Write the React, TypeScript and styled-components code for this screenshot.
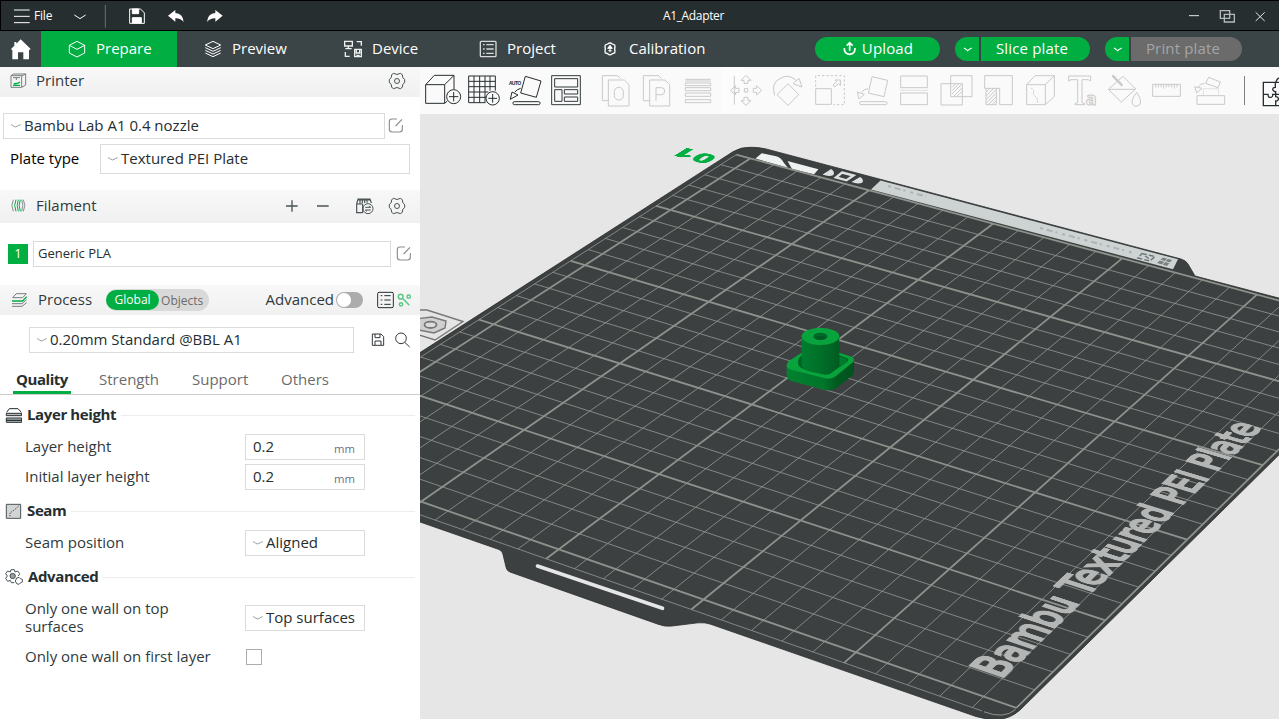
import React from "react";
import styled, { createGlobalStyle, css } from "styled-components";

const Global = createGlobalStyle`
  * { box-sizing: border-box; }
  body { margin: 0; background: #fff; font-family: "Open Sans", "Noto Sans", sans-serif; font-size: 15px; color: #262e30; }
`;

/* Camera: maps plate millimetres (u across, v towards the viewer) to window pixels. */
const C = [2.03455206, -2.02893772, 750.233961, 0.56395418, 0.89673852, 158.387127, -0.00039686, -0.00064503];

const OX = 420;
const OY = 114;
const project = (u: number, v: number) => {
  const w = C[6] * u + C[7] * v + 1;
  return [(C[0] * u + C[1] * v + C[2]) / w - OX, (C[3] * u + C[4] * v + C[5]) / w - OY];
};
const seg = (u1: number, v1: number, u2: number, v2: number) => {
  const a = project(u1, v1);
  const b = project(u2, v2);
  return `M${a[0].toFixed(2)} ${a[1].toFixed(2)}L${b[0].toFixed(2)} ${b[1].toFixed(2)}`;
};
/* Places flat lettering on the plate: local pixels -> plate millimetres -> scene pixels. */
const decal = (u0: number, ux: number, uy: number, v0: number, vx: number, vy: number) => {
  const row = (a: number, b: number, c: number) => [a * ux + b * vx, a * uy + b * vy, a * u0 + b * v0 + c];
  const w = row(C[6], C[7], 1);
  const x = row(C[0], C[1], C[2]).map((n, i) => n - OX * w[i]);
  const y = row(C[3], C[4], C[5]).map((n, i) => n - OY * w[i]);
  return `matrix3d(${[x[0], y[0], 0, w[0], x[1], y[1], 0, w[1], 0, 0, 1, 0, x[2], y[2], 0, w[2]].map((n) => n.toFixed(8)).join(",")})`;
};

/* Glyphs are drawn on a grid three times finer than the pixel. */
type GlyphProps = { w: number; h: number; x: number; y: number; color?: string; sw?: number; children: React.ReactNode };
const GlyphSvg = styled.svg`
  display: block;
  flex: none;
  fill: none;
`;
const Glyph = ({ w, h, x, y, color = "#4a5356", sw = 3, children }: GlyphProps) => (
  <GlyphSvg width={w} height={h} viewBox={`${x} ${y} ${w * 3} ${h * 3}`} stroke={color} strokeWidth={sw}>
    {children}
  </GlyphSvg>
);

/* ---------- shell ---------- */
const Window = styled.div`
  width: 1279px;
  height: 719px;
  overflow: hidden;
  display: flex;
  flex-direction: column;
`;
const Caption = styled.span`
  padding-bottom: 2px;
`;
const TitleBar = styled.header`
  height: 31px;
  flex: none;
  display: flex;
  align-items: center;
  background: #262e30;
  border-top: 1px solid #000;
  border-bottom: 1px solid #000;
  border-left: 1px solid #000;
  color: #fff;
  font-size: 12px;
`;
const TitleSide = styled.div<{ $end?: boolean }>`
  flex: 1;
  display: flex;
  align-items: center;
  justify-content: ${(p) => (p.$end ? "flex-end" : "flex-start")};
`;
const FileLabel = styled.span`
  width: 23px;
  margin-left: 2px;
  font-size: 12px;
  letter-spacing: -0.2px;
`;
const DocTitle = styled.h1`
  margin: 0 0 0 107px;
  font-size: 12px;
  font-weight: 400;
  letter-spacing: -0.35px;
`;
const NavBar = styled.nav`
  height: 36px;
  flex: none;
  display: flex;
  align-items: center;
  background: #3b4446;
`;
const Home = styled.div`
  width: 41px;
  height: 36px;
`;
const Tab = styled.div<{ $active?: boolean; $pad: number; $gap: number }>`
  width: 136px;
  height: 36px;
  padding-left: ${(p) => p.$pad}px;
  display: flex;
  align-items: center;
  gap: ${(p) => p.$gap}px;
  color: #fff;
  background: ${(p) => (p.$active ? "#00ae42" : "transparent")};
`;
const Actions = styled.div`
  margin-left: 94px;
  display: flex;
  gap: 15px;
`;
const Split = styled.div`
  display: flex;
  gap: 2px;
`;
const Pill = styled.button<{ $w: number; $side?: "left" | "right"; $off?: boolean }>`
  width: ${(p) => p.$w}px;
  height: 24px;
  padding: 0 ${(p) => (p.$side === "right" ? 7 : 0)}px 0 0;
  border: 0;
  display: flex;
  align-items: center;
  justify-content: center;
  gap: 5px;
  font: inherit;
  line-height: 22px;
  letter-spacing: 0.15px;
  color: ${(p) => (p.$off ? "#a5a5a5" : "#fff")};
  background: ${(p) => (p.$off ? "#6b6b6b" : "#00ae42")};
  border-radius: ${(p) => (p.$side === "left" ? "12px 0 0 12px" : p.$side === "right" ? "0 12px 12px 0" : "12px")};
`;
const Body = styled.div`
  flex: 1;
  display: flex;
  min-height: 0;
`;

/* ---------- sidebar ---------- */
const Sidebar = styled.aside`
  width: 420px;
  flex: none;
  display: flex;
  flex-direction: column;
  background: #fff;
`;
const SectionBar = styled.div<{ $h: number; $bottom?: number; $right?: number; $top?: number }>`
  height: ${(p) => p.$h}px;
  margin-top: ${(p) => p.$top ?? 0}px;
  flex: none;
  display: flex;
  align-items: center;
  padding: 0 ${(p) => p.$right ?? 6}px ${(p) => p.$bottom ?? 0}px 9px;
  background: linear-gradient(#f8f8f8, #f0f0f0);
  color: #303a3c;
`;
const SectionName = styled(Caption)`
  margin-left: 9px;
`;
const Spacer = styled.div`
  flex: 1;
`;
const Row = styled.div<{ $top: number; $left: number; $gap?: number }>`
  margin-top: ${(p) => p.$top}px;
  padding-left: ${(p) => p.$left}px;
  display: flex;
  align-items: center;
  gap: ${(p) => p.$gap ?? 0}px;
`;
const Field = styled.div<{ $w: number; $h?: number; $pad?: number; $size?: number }>`
  width: ${(p) => p.$w}px;
  height: ${(p) => p.$h ?? 26}px;
  flex: none;
  display: flex;
  align-items: center;
  gap: 2px;
  padding: 0 9px 0 ${(p) => p.$pad ?? 6}px;
  border: 1px solid #dbdbdb;
  background: #fff;
  font-size: ${(p) => p.$size ?? 15}px;
  white-space: nowrap;
`;
const PlateLabel = styled.label`
  width: 90px;
  padding-bottom: 3px;
  color: #000;
`;
const Swatch = styled.div`
  width: 20px;
  height: 20px;
  background: #00ae42;
  color: #fff;
  font-size: 13px;
  line-height: 19px;
  text-align: center;
`;
const Scope = styled.div`
  width: 103px;
  height: 22px;
  margin-left: 14px;
  display: flex;
  align-items: center;
  border-radius: 11px;
  background: #d9d9d9;
  color: #6b6b6b;
  font-size: 12px;
  gap: 2px;
`;
const ScopeOn = styled.span`
  width: 53px;
  height: 20px;
  border-radius: 10px;
  background: #00ae42;
  color: #fff;
  line-height: 20px;
  text-align: center;
`;
const Toggle = styled.div`
  width: 27px;
  height: 16px;
  margin: 0 13px 0 2px;
  padding: 1px;
  border-radius: 8px;
  background: #acacac;
  &::before { content: ""; display: block; width: 14px; height: 14px; border-radius: 7px; background: #fff; }
`;
const Tabs = styled.div`
  height: 36px;
  margin-top: 6px;
  padding-left: 13px;
  display: flex;
  flex: none;
  border-bottom: 1px solid #cecece;
`;
const SubTab = styled.div<{ $w: number; $on?: boolean }>`
  width: ${(p) => p.$w}px;
  height: 35px;
  padding: 9px 0 0 3px;
  line-height: 22px;
  color: #6b6b6b;
  ${(p) => p.$on && css`
    margin-right: 25px;
    font-weight: 700;
    letter-spacing: -0.45px;
    color: #262e30;
    box-shadow: inset 0 -3px #00ae42;
  `}
`;
const GroupHead = styled.div<{ $top: number }>`
  height: 20px;
  margin-top: ${(p) => p.$top}px;
  padding: 0 5px;
  display: flex;
  align-items: center;
  gap: 5px;
  font-weight: 700;
  letter-spacing: -0.38px;
  &::after { content: ""; flex: 1; height: 1px; background: #ededed; }
`;
const Option = styled.div<{ $top: number }>`
  height: 26px;
  margin-top: ${(p) => p.$top}px;
  padding-left: 25px;
  display: flex;
  align-items: center;
`;
const OptionName = styled.label<{ $wide?: boolean }>`
  width: 220px;
  padding: 0 ${(p) => (p.$wide ? 0 : 40)}px 2px 0;
  line-height: 18px;
  color: #303a3c;
`;
const Unit = styled.span`
  margin-left: auto;
  padding-top: 3px;
  font-size: 11.3px;
  color: #6b6f86;
`;
const Check = styled.div`
  width: 16px;
  height: 16px;
  margin-left: 1px;
  border: 1px solid #acacac;
`;

/* ---------- workspace ---------- */
const Workspace = styled.main`
  flex: 1;
  min-width: 0;
  display: flex;
  flex-direction: column;
`;
const Toolbar = styled.div`
  height: 47px;
  flex: none;
  display: flex;
  padding-left: 4px;
  background: #fafafa;
  overflow: hidden;
`;
const Divider = styled.div`
  width: 1px;
  height: 29px;
  margin: 9px 12px 0;
  background: #7c8284;
`;
const Scene = styled.div`
  flex: 1;
  position: relative;
  overflow: hidden;
  background: #e6e6e6;
`;
const PlateSvg = styled.svg`
  display: block;
`;
const Decal = styled.div<{ $m: string; $size: number; $color: string; $bold?: boolean; $stroke?: number }>`
  position: absolute;
  left: 0;
  top: 0;
  transform-origin: 0 0;
  transform: ${(p) => p.$m};
  font-family: ${(p) => (p.$bold ? '"Open Sans"' : '"DejaVu Sans"')}, sans-serif;
  font-size: ${(p) => p.$size}px;
  font-weight: ${(p) => (p.$bold ? 800 : 400)};
  line-height: 1;
  white-space: pre;
  color: ${(p) => p.$color};
  -webkit-text-stroke: ${(p) => p.$stroke ?? 0}px ${(p) => p.$color};
`;

const Caret = () => (
  <Glyph w={12} h={8} x={0} y={0} color="#9a9fa0">
    <path d="M3 8 Q8 10 12 13 Q17 17 21 13 Q26 10 32 8" />
  </Glyph>
);
const GearShape = () => (
  <>
    <path d="M1181 220 Q1191 227 1201 220 L1207 224 Q1206 235 1214 238 L1214 248 Q1206 251 1207 262 L1201 266 Q1191 259 1181 266 L1175 262 Q1176 251 1168 248 L1168 238 Q1176 235 1175 224 Z" />
    <circle cx="1191" cy="243" r="7.5" />
  </>
);
const Edit = () => (
  <Glyph w={16} h={18} x={1165} y={349} color="#8a8f90">
    <path d="M1192 355 H1177 Q1169 355 1169 363 V386 Q1169 394 1177 394 H1200 Q1208 394 1208 386 V373 M1188 376 L1207 356" strokeWidth="3.5" />
  </Glyph>
);
const SmallCaret = () => (
  <Glyph w={12} h={8} x={0} y={0} color="#fff">
    <path d="M9 9 Q16 13 20 17 Q24 13 32 9" strokeWidth="3.5" />
  </Glyph>
);

const g = "#c9c9c9";
const Tools = () => (
  <Toolbar>
    <Glyph w={40} h={46} x={12} y={201} color="#262e30">
      <path d="M17 254 H74 V310 H17 Z M17 254 L43 226 H102 L74 254 M102 226 V268 M74 310 L82 303" />
      <circle cx="101" cy="290" r="21" /><path d="M101 276 V304 M87 290 H115" />
    </Glyph>
    <Glyph w={42} h={46} x={132} y={201} color="#262e30">
      <path d="M146 228 H226 V272 M146 228 V308 H196 M162 228 V308 M179 228 V308 M195 228 V308 M210 228 V272 M146 244 H226 M146 260 H226 M146 276 H205 M146 292 H198" />
      <circle cx="218" cy="295" r="20" /><path d="M218 282 V308 M205 295 H231" />
    </Glyph>
    <Glyph w={40} h={46} x={258} y={201} color="#262e30">
      <path d="M316 229 L363 243 L349 292 L302 279 Z M302 265 Q290 268 284 277 M276 276 L294 285 L271 298 Z" />
      <rect x="279" y="305" width="81" height="9" rx="4" />
      <text x="267" y="254" fontSize="15" fontWeight="700" fontFamily="Open Sans, sans-serif" fill="#262e30" stroke="none" textLength="37">AUTO</text>
    </Glyph>
    <Glyph w={44} h={46} x={378} y={201} color="#33393b">
      <path d="M395 227 H481 V314 H395 Z M404 236 H473 V261 H404 Z M404 269 H426 V304 H404 Z M433 269 H473 V282 H433 Z M433 291 H473 V304 H433 Z" />
    </Glyph>
    <Glyph w={46} h={46} x={510} y={201} color={g}>
      <path d="M565 302 H547 V227 H593 L601 235 M565 240 H613 L627 254 V318 H565 Z" />
      <rect x="583" y="262" width="27" height="38" rx="13" />
    </Glyph>
    <Glyph w={42} h={46} x={648} y={201} color={g}>
      <path d="M689 302 H670 V227 H716 L724 235 M689 240 H735 L749 254 V318 H689 Z M708 302 V263 H724 Q734 263 734 273 Q734 284 724 284 H708" />
    </Glyph>
    <Glyph w={44} h={46} x={774} y={201} color={g}>
      <path d="M796 238 H872 M796 243 H872 M796 249 H872 V257 H796 Z M796 263 H872 V272 H796 Z M796 279 H872 V289 H796 Z M796 299 H872 V308 H796 Z" />
    </Glyph>
    <Glyph w={45} h={46} x={906} y={201} color={g}>
      <rect x="906" y="201" width="70" height="138" fill="#fff" stroke="none" opacity=".4" />
      <path d="M943 228 V314 M973 266 H983 V276 H973 Z M978 226 L993 241 H984 V250 H972 V241 H963 Z M978 316 L993 302 H984 V292 H972 V302 H963 Z M932 271 L946 257 V265 H957 V277 H946 V285 Z M1025 271 L1010 257 V265 H1000 V277 H1010 V285 Z" />
    </Glyph>
    <Glyph w={41} h={46} x={1041} y={201} color={g}>
      <path d="M1064 286 Q1052 250 1079 236 Q1105 220 1127 240 M1119 251 L1137 235 L1146 261 Z M1104 251 L1136 284 L1104 316 L1071 284 Z" />
    </Glyph>
    <Glyph w={42} h={46} x={1164} y={201} color={g}>
      <path d="M1187 266 H1234 V313 H1187 Z" /><path strokeDasharray="7 6" d="M1187 260 V227 H1273 V314 H1240" />
      <path d="M1239 255 L1250 245 L1245 240 L1261 240 V257 L1255 251 L1244 261 Z" />
    </Glyph>
    <Glyph w={43} h={46} x={0} y={201} color={g}>
      <path d="M66 230 L113 241 L102 290 L55 279 Z M54 266 Q41 267 35 277 M22 276 L43 283 L27 297 Z" /><rect x="29" y="305" width="82" height="9" rx="4" />
    </Glyph>
    <Glyph w={41} h={46} x={129} y={201} color={g}>
      <path d="M152 228 H232 V263 H152 Z M152 279 H232 V314 H152 Z" /><path strokeDasharray="3 3" d="M152 271 H234" />
    </Glyph>
    <Glyph w={44} h={46} x={252} y={201} color={g}>
      <path d="M302 227 H366 V290 H302 Z M273 251 H337 V315 H273 Z M306 262 L316 252 M306 272 L326 252 M306 282 L335 253 M312 288 L336 264 M322 288 L336 274" />
    </Glyph>
    <Glyph w={41} h={46} x={384} y={201} color={g}>
      <path d="M404 227 H487 V314 H449 V265 H404 Z M408 265 V314 H439 V265 M409 276 L419 266 M409 287 L429 267 M409 298 L438 269 M409 309 L438 280 M416 313 L438 291 M427 313 L438 302" />
    </Glyph>
    <Glyph w={42} h={46} x={507} y={201} color={g}>
      <path d="M530 254 H586 V314 H530 Z M530 254 L555 227 H613 L586 254 M613 227 V290 L586 314" /><path strokeDasharray="5 3" d="M543 263 L552 273 L549 282 L561 294 L563 310" />
    </Glyph>
    <Glyph w={41} h={46} x={633} y={201} color={g}>
      <path d="M656 228 H722 V242 H718 L716 239 H696 V308 L704 311 V314 H675 V311 L683 308 V239 H661 L660 243 H656 Z" />
      <text x="707" y="315" fontSize="54" fontWeight="700" fontFamily="Open Sans, sans-serif" stroke={g} strokeWidth="3">a</text>
    </Glyph>
    <Glyph w={44} h={46} x={756} y={201} color={g}>
      <path d="M775 268 L819 229 L857 267 L814 306 Z M777 268 H856 M860 277 Q846 294 846 306 Q848 319 860 319 Q871 317 872 306 Q872 294 860 277 Z" /><path strokeWidth="7" d="M787 226 L817 257" />
    </Glyph>
    <Glyph w={42} h={46} x={888} y={201} color={g}>
      <path d="M908 253 H991 V289 H908 Z M917 253 V262 M925 253 V262 M933 253 V262 M941 253 V266 M949 253 V262 M957 253 V262 M965 253 V262 M973 253 V266 M981 253 V262" />
    </Glyph>
    <Glyph w={44} h={46} x={1014} y={201} color={g}>
      <path d="M1076 232 L1111 246 L1104 263 L1067 250 Z M1063 250 Q1052 250 1045 261 M1034 260 L1056 265 L1040 279 Z M1041 287 H1124 V313 H1041 Z" /><path strokeDasharray="3 3" d="M1060 283 V266 H1106 V283" />
    </Glyph>
    <Divider />
    <Glyph w={22} h={46} x={1221} y={201} color="#262e30">
      <path d="M1287 247 H1277 Q1281 236 1287 234 M1275 247 H1240 V317 H1287 M1240 283 H1254 Q1254 294 1263 292 Q1270 290 1268 283 H1287 M1276 247 V262 Q1266 262 1269 271 Q1274 276 1277 275 V290 Q1286 290 1285 299 Q1282 304 1277 303 V317" strokeWidth="4" />
    </Glyph>
  </Toolbar>
);

/* Grid lines every 10 mm, every fifth one heavier. */
const thin: string[] = [];
const bold: string[] = [];
for (let k = 0; k <= 25; k++) {
  (k % 5 ? thin : bold).push(seg(k * 10, 0, k * 10, k === 25 ? 250 : 256), seg(-6, k * 10, 250, k * 10));
}
thin.push(seg(-6, 0, -6, 256), seg(-6, 256, 243, 256));

const ModelSvg = styled.svg`
  position: absolute;
  left: 350px;
  top: 196px;
`;
const Model = () => (
  <ModelSvg width={110} height={95} viewBox="0 0 330 285" fill="none">
    <defs>
      <linearGradient id="barrel" x1="0" x2="1" y1="0" y2="0">
        <stop offset="0" stopColor="#007d2e" /><stop offset=".5" stopColor="#006f29" /><stop offset="1" stopColor="#005c21" />
      </linearGradient>
      <linearGradient id="wall" x1="0" x2="1" y1="0" y2="0">
        <stop offset="0" stopColor="#008230" /><stop offset=".55" stopColor="#00752b" /><stop offset=".75" stopColor="#005a20" /><stop offset="1" stopColor="#00521d" />
      </linearGradient>
    </defs>
    <path d="M50 165 V197 Q51 209 66 214 L165 240 Q185 244 200 233 L245 198 Q253 191 252 182 V150 Z" fill="url(#wall)" />
    <path d="M50 168 Q50 158 60 151 L95 128 H208 L244 140 Q256 146 250 155 L198 198 Q184 209 165 205 L64 179 Q50 175 50 168 Z" fill="#08a33d" />
    <path d="M84 158 Q84 142 97 136 H208 L230 144 Q239 149 232 155 L180 191 Q171 196 158 192 L104 178 Q84 172 84 158 Z" fill="#006124" />
    <path d="M208 138 L230 146 Q235 150 230 155 L208 171 Z" fill="#007a2d" />
    <path d="M95 78 V168 Q100 181 125 186 L158 192 Q166 195 178 190 L208 168 V78 Z" fill="url(#barrel)" />
    <ellipse cx="151.5" cy="79" rx="56.5" ry="26" fill="#08a33d" />
    <ellipse cx="151" cy="79" rx="21" ry="11" fill="#006b28" />
    <path d="M132 82 Q151 74 170 82 Q165 90 151 90 Q137 90 132 82 Z" fill="#005c22" />
  </ModelSvg>
);

const Viewport = () => (
  <Scene>
    <PlateSvg width={859} height={605} viewBox="0 0 859 605" fill="none">
      <g transform="translate(-420 -114)">
        <path d="M410 310 L427 310 L463 321.5 L435 340 L410 332" fill="#e4e4e4" stroke="#777" strokeWidth="1.4" />
        <path d="M414 319 L432 317 L446 321 L445 328 L434 333 L414 329 Z" fill="#cfcfcf" stroke="#777" strokeWidth="1.4" />
        <ellipse cx="430.5" cy="324.8" rx="6" ry="3.2" fill="#dcdcdc" stroke="#777" strokeWidth="1.8" />
        <path
          d="M410 359 L733 151.7 Q741 147 750 147.3 Q757 147 765 148.7 L1181 259 Q1186 260.5 1188 264 L1195 276 L1290 301 V444 L1020 710 Q1010 719 997 719.5 Q988 720 976 716.5 L710 624 Q705 622.3 698 622.8 L672 626 Q665 627 658 624.2 L510 572 Q506.5 570.5 506 567 L503 554.5 Q502.5 551 499 549.5 L410 518.5 Z"
          fill="#3c4040" stroke="#2c2f2f" strokeWidth=".8"
        />
        <path d="M537.5 566 L662.5 608.3" stroke="#e6e6e6" strokeWidth="3.6" strokeLinecap="round" />
        <path d="M880.5 180.5 L1178 259.3 L1173 269.3 L871 189.5 Z" fill="#cdd2d3" />
        <path d="M888 186 L926 196.500 M1040 228 L1132 252.500" stroke="#adb3b4" strokeWidth="2" strokeDasharray="3 4 6 3 2 5" />
        <path d="M761.7 153.3 L775 156 Q781 157 784 163 L788 168 L755.5 158.5 Z M787.5 161 L818.5 169.3 L814 174.300 L792 169 Z" fill="#f0f1f1" />
        <path d="M831 169 Q835 171 833.500 175 Q829 177 822.500 174.500 Q826 172.500 831 169 Z M860 177 Q864 179 862.500 182.500 Q858 184.500 851.500 182 Q855 180 860 177 Z" fill="#dfe1e1" />
        <path d="M842 172.5 L853.5 175.5 L846.5 180.3 L836 177.5 Z" stroke="#dfe1e1" strokeWidth="2.4" />
        <path d="M1142 253.5 L1155 256.5 L1150 261 L1138 258 Z M1145 256 L1149 258.500" stroke="#6e7475" strokeWidth="1.4" strokeDasharray="5 2" />
        <path d="M1163 257.5 L1172 260 L1167 266 L1157 263 Z" fill="#7b8081" /><path d="M1160 260 L1170 263 M1168 258 L1162 265" stroke="#cdd2d3" />
        <path d="M984 711.800 Q1004 719.500 1015.500 709.500" stroke="#8f948f" />
      </g>
      <path d={thin.join("")} stroke="#8f948f" strokeWidth="1" opacity=".85" />
      <path d={bold.join("")} stroke="#8d928c" strokeWidth="1.8" />
    </PlateSvg>
    <Decal $m={decal(228.2, 0, 0.25, 240.3, -0.228, 0)} $size={55} $color="#b4b6b6" $stroke={4}>Bambu Textured PEI Plate</Decal>
    <Decal $m={decal(-10.2, -0.3, 0, 14.6, 0, -0.25)} $size={45} $color="#00ae42" $bold>01</Decal>
    <Model />
  </Scene>
);

const App = () => (
  <Window>
    <Global />
    <TitleBar>
      <TitleSide>
        <Glyph w={31} h={28} x={3} y={3} color="#fff"><path d="M42 27 H89 M42 46 H89 M42 65 H89" /></Glyph>
        <FileLabel>File</FileLabel>
        <Glyph w={170} h={28} x={171} y={3} color="#fff">
          <path d="M223 42 Q236 50 240 53 Q244 50 257 42" /><path d="M316 12 V80" stroke="#6a7072" />
          <path d="M389 24 H421 L433 35 V67 H389 Z" /><path d="M397 24 H416 V38 H397 Z M397 50 H424 V66 H397 Z" fill="#fff" />
          <path d="M504 44 L526 27 V36 Q549 38 551 63 Q541 51 526 52 V62 Z M668 44 L646 27 V36 Q623 38 621 63 Q631 51 646 52 V62 Z" fill="#fff" stroke="none" />
        </Glyph>
      </TitleSide>
      <DocTitle>A1_Adapter</DocTitle>
      <TitleSide $end>
        <Glyph w={96} h={28} x={999} y={3} color="#e4e6e6">
          <path d="M1017 44 H1047 M1217 34 L1244 60 M1244 34 L1217 60" /><path d="M1111 29 H1139 V52 H1111 Z M1123 40 H1153 V63 H1123 Z" stroke="#b4b8b9" strokeWidth="4" />
        </Glyph>
      </TitleSide>
    </TitleBar>
    <NavBar>
      <Home>
        <Glyph w={41} h={36} x={0} y={93}><path d="M62 118 L92 147 L87 151 V178 H70 V157 H54 V178 H37 V151 L33 147 L43 137 V126 H49 V131 Z" fill="#fff" stroke="none" /></Glyph>
      </Home>
      <Tab $active $pad={27} $gap={10}>
        <Glyph w={18} h={18} x={204} y={120} color="#fff"><path d="M231 124 L254 136 V159 L231 171 L208 159 V136 Z M208 136 L231 148 L254 136" /></Glyph><Caption>Prepare</Caption>
      </Tab>
      <Tab $pad={27} $gap={10}>
        <Glyph w={18} h={18} x={612} y={120} color="#fff"><path d="M639 124 L662 135 L639 146 L616 135 Z M616 143 L639 154 L662 143 M616 151 L639 162 L662 151 M616 159 L639 170 L662 159" /></Glyph><Caption>Preview</Caption>
      </Tab>
      <Tab $pad={30} $gap={9}>
        <Glyph w={20} h={18} x={1029} y={120} color="#eef0f0" sw={4}><path d="M1034 124 H1057 V138 H1034 Z M1045 138 V145 M1036 146 H1055 M1070 125 H1084 V137 M1036 156 V169 H1049 M1064 148 H1084 V170 H1064 Z M1069 149 V159 H1079 V149 M1069 166 H1079" /></Glyph><Caption>Device</Caption>
      </Tab>
      <Tab $pad={30} $gap={10}>
        <Glyph w={18} h={18} x={178} y={120} color="#d6d8d9" sw={4}><rect x="182" y="124" width="47" height="46" rx="3" /><path d="M190 134 H195 M200 134 H222 M190 147 H195 M200 147 H222 M190 160 H195 M200 160 H222" /></Glyph><Caption>Project</Caption>
      </Tab>
      <Tab $pad={16} $gap={10}>
        <Glyph w={18} h={18} x={543} y={120} color="#fff"><path d="M563 132 Q570 126 577 132 L584 135 Q586 140 584 147 Q586 154 584 159 L577 161 Q570 168 563 161 L556 159 Q554 154 556 147 Q554 140 556 135 Z" strokeWidth="4" /><path d="M570 137 V157 M570 136 L563 145 H577 Z M565 152 H575" fill="#fff" /></Glyph><Caption>Calibration</Caption>
      </Tab>
      <Actions>
        <Pill $w={125}>
          <Glyph w={15} h={16} x={0} y={0} color="#fff" sw={5}><path d="M23 29 V6 M14 14 L23 5 L32 14 M7 21 Q6 39 23 40 Q40 39 39 21" /></Glyph><Caption>Upload</Caption>
        </Pill>
        <Split>
          <Pill $w={24} $side="left"><SmallCaret /></Pill>
          <Pill $w={109} $side="right"><Caption>Slice plate</Caption></Pill>
        </Split>
        <Split>
          <Pill $w={24} $side="left"><SmallCaret /></Pill>
          <Pill $w={111} $side="right" $off><Caption>Print plate</Caption></Pill>
        </Split>
      </Actions>
    </NavBar>
    <Body>
      <Sidebar>
        <SectionBar $h={30} $bottom={2} $right={14}>
          <Glyph w={18} h={18} x={27} y={216} color="#777d7f">
            <path d="M33 227 H65 V262 H33 Z M33 227 L41 222 H77 L65 228 M77 222 V255 L65 262 M39 233 H60 M49 233 V240" /><path d="M39 256 H60 M41 251 Q52 252 60 246" stroke="#00ae42" strokeWidth="4" />
          </Glyph>
          <SectionName>Printer</SectionName><Spacer />
          <Glyph w={18} h={18} x={1164} y={216}><GearShape /></Glyph>
        </SectionBar>
        <Row $top={16} $left={3} $gap={3}>
          <Field $w={382}><Caret /><Caption>Bambu Lab A1 0.4 nozzle</Caption></Field><Edit />
        </Row>
        <Row $top={5} $left={10}>
          <PlateLabel>Plate type</PlateLabel><Field $w={310} $h={30}><Caret /><Caption>Textured PEI Plate</Caption></Field>
        </Row>
        <SectionBar $top={16} $h={33} $bottom={1} $right={5}>
          <Glyph w={18} h={18} x={27} y={591} color="#888e90">
            <path d="M40 599 Q31 616 40 634 M70 599 Q79 616 70 634 M65 599 Q72 616 65 634" /><path d="M48 599 Q40 616 48 634 M55 599 Q48 616 55 634 M61 599 Q54 616 61 634" stroke="#00ae42" />
          </Glyph>
          <SectionName>Filament</SectionName><Spacer />
          <Glyph w={132} h={22} x={849} y={585}>
            <path d="M858 618 H893 M876 601 V635 M951 618 H986" strokeWidth="4" />
            <path d="M1070 612 L1074 597 H1110 L1114 609 M1088 612 H1070 V638 H1088 M1088 612 V638 M1080 600 V611 M1087 600 V610 M1094 600 V609 M1101 600 V608 M1074 600 H1110" strokeWidth="3.5" />
            <circle cx="1104" cy="626" r="15" /><path d="M1096 622 H1112 L1107 618 M1112 630 H1096 L1101 634" />
            <g transform="translate(0 375)"><GearShape /></g>
          </Glyph>
        </SectionBar>
        <Row $top={18} $left={8} $gap={5}>
          <Swatch>1</Swatch><Field $w={358} $pad={4} $size={13}><Caption>Generic PLA</Caption></Field><Edit />
        </Row>
        <SectionBar $top={18} $h={30}>
          <Glyph w={20} h={20} x={27} y={300} color="#777d7f">
            <path d="M38 323 L49 311 H79 L68 323 Z M36 341 H66 L80 329 M36 349 H66 L80 338" /><path d="M36 333 H68 L80 320" stroke="#00ae42" strokeWidth="4" />
          </Glyph>
          <SectionName>Process</SectionName>
          <Scope><ScopeOn>Global</ScopeOn>Objects</Scope>
          <Spacer /><Caption>Advanced</Caption><Toggle />
          <Glyph w={38} h={20} x={1128} y={300}>
            <rect x="1133" y="307" width="47" height="46" rx="4" stroke="#262e30" /><path d="M1142 317 H1147 M1153 317 H1172 M1142 330 H1147 M1153 330 H1172 M1142 343 H1147 M1153 343 H1172" stroke="#262e30" />
            <g stroke="#5cc984" strokeWidth="4.5"><circle cx="1202" cy="320" r="7" /><circle cx="1226" cy="320" r="5" /><circle cx="1203" cy="343" r="5" /><path d="M1209 326 L1228 346" /></g>
          </Glyph>
        </SectionBar>
        <Row $top={12} $left={29} $gap={15}>
          <Field $w={325}><Caret /><Caption>0.20mm Standard @BBL A1</Caption></Field>
          <Glyph w={44} h={20} x={1107} y={421} color="#33393b">
            <path d="M1117 433 H1143 L1151 441 V467 H1117 Z M1125 433 V444 H1140 V433 M1125 467 V454 H1143 V467" /><circle cx="1203" cy="446" r="16" /><path d="M1214 458 L1229 472" />
          </Glyph>
        </Row>
        <Tabs>
          <SubTab $w={58} $on>Quality</SubTab><SubTab $w={93}>Strength</SubTab><SubTab $w={89}>Support</SubTab><SubTab $w={80}>Others</SubTab>
        </Tabs>
        <GroupHead $top={10}>
          <Glyph w={17} h={18} x={15} y={33} color="#262e30"><path d="M20 52 L28 41 H54 L64 52" /><path d="M19 55 H65 V62 H19 Z M19 69 H65 V76 H19 Z M19 76 H65 V82 H19 Z" fill="#b9bdbe" /></Glyph>
          <Caption>Layer height</Caption>
        </GroupHead>
        <Option $top={9}><OptionName>Layer height</OptionName><Field $w={120} $pad={7}><Caption>0.2</Caption><Unit>mm</Unit></Field></Option>
        <Option $top={4}><OptionName>Initial layer height</OptionName><Field $w={120} $pad={7}><Caption>0.2</Caption><Unit>mm</Unit></Field></Option>
        <GroupHead $top={11}>
          <Glyph w={17} h={18} x={15} y={321}><path d="M19 328 H62 V370 H19 Z" fill="#d3d5d5" /><path d="M30 364 V354 L45 343 L57 332" strokeDasharray="4 3" /></Glyph>
          <Caption>Seam</Caption>
        </GroupHead>
        <Option $top={9}><OptionName>Seam position</OptionName><Field $w={120}><Caret /><Caption>Aligned</Caption></Field></Option>
        <GroupHead $top={11}>
          <Glyph w={18} h={18} x={15} y={519}>
            <path d="M33 524 H43 L45 531 L53 528 L59 536 L55 543 M33 524 L31 531 L23 528 L17 536 L22 543 L17 550 L23 559 L31 556 L34 563 H43" /><circle cx="38" cy="543" r="8" fill="#9a9fa0" />
            <path d="M50 549 L57 547 L61 551 L67 553 V561 L61 564 L57 568 L50 566 L46 558 Z" />
          </Glyph>
          <Caption>Advanced</Caption>
        </GroupHead>
        <Option $top={18}><OptionName>Only one wall on top surfaces</OptionName><Field $w={120}><Caret /><Caption>Top surfaces</Caption></Field></Option>
        <Option $top={13}><OptionName $wide>Only one wall on first layer</OptionName><Check /></Option>
      </Sidebar>
      <Workspace>
        <Tools />
        <Viewport />
      </Workspace>
    </Body>
  </Window>
);

export default App;
